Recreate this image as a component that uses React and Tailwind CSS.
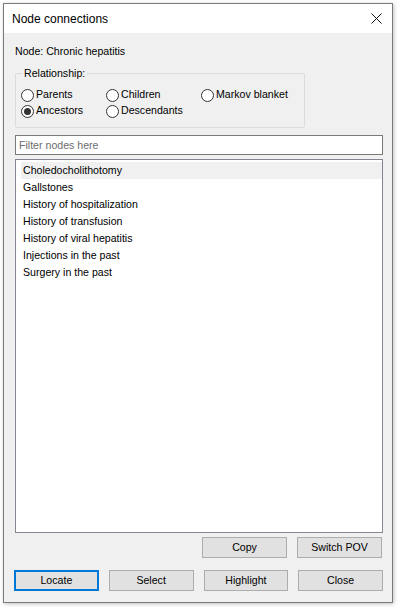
import React, { useState } from 'react';

const nodes = [
  'Choledocholithotomy',
  'Gallstones',
  'History of hospitalization',
  'History of transfusion',
  'History of viral hepatitis',
  'Injections in the past',
  'Surgery in the past',
];

const Radio = ({ label, checked, onClick, width }) => (
  <button onClick={onClick} className={`flex items-center gap-[2px] h-4 text-left ${width}`}>
    <span className="w-[13px] h-[13px] rounded-full border border-[#333] bg-white flex items-center justify-center shrink-0">
      {checked && <span className="w-[7px] h-[7px] rounded-full bg-[#333]"></span>}
    </span>
    <span>{label}</span>
  </button>
);

const Btn = ({ children, focused }) => (
  <button
    className={`w-[85px] h-[21px] bg-[#e1e1e1] flex items-center justify-center ${
      focused ? 'border-2 border-[#0078d7]' : 'border border-[#adadad]'
    }`}
  >
    {children}
  </button>
);

export default function App() {
  const [rel, setRel] = useState('Ancestors');
  const [filter, setFilter] = useState('');

  const shown = nodes.filter((n) => n.toLowerCase().includes(filter.toLowerCase()));

  return (
    <div className="w-[397px] h-[607px] bg-white pt-[3px] pl-[3px] text-[10.6px] text-black" style={{ fontFamily: '"Liberation Sans", Arial, sans-serif' }}>
      <div className="w-[390px] h-[600px] border border-[#7a7a7a] shadow-[1px_1px_4px_rgba(0,0,0,0.25)] flex flex-col bg-[#f0f0f0]">
        {/* title bar */}
        <div className="h-[29px] bg-white flex items-center justify-between pl-[8px] pr-[8px] shrink-0">
          <span className="text-[12px]">Node connections</span>
          <svg width="11" height="11" viewBox="0 0 11 11" className="mr-[2px]">
            <path d="M0.5 0.5 L10.5 10.5 M10.5 0.5 L0.5 10.5" stroke="#111" strokeWidth="1" />
          </svg>
        </div>

        <div className="flex-1 flex flex-col pl-[11px] pr-[9px]">
          <div className="mt-[12px] h-[13px] leading-[13px]">Node: Chronic hepatitis</div>

          {/* relationship group */}
          <div className="relative mt-[15px] w-[290px] h-[55px] border border-[#dcdcdc] rounded-[2px]">
            <span className="absolute -top-[7px] left-[6px] px-[2px] bg-[#f0f0f0] leading-[13px]">Relationship:</span>
            <div className="pt-[13px] pl-[5px] flex flex-col">
              <div className="flex">
                <Radio label="Parents" width="w-[85px]" checked={rel === 'Parents'} onClick={() => setRel('Parents')} />
                <Radio label="Children" width="w-[95px]" checked={rel === 'Children'} onClick={() => setRel('Children')} />
                <Radio label="Markov blanket" checked={rel === 'Markov'} onClick={() => setRel('Markov')} />
              </div>
              <div className="flex">
                <Radio label="Ancestors" width="w-[85px]" checked={rel === 'Ancestors'} onClick={() => setRel('Ancestors')} />
                <Radio label="Descendants" width="w-[95px]" checked={rel === 'Descendants'} onClick={() => setRel('Descendants')} />
              </div>
            </div>
          </div>

          {/* filter */}
          <input
            value={filter}
            onChange={(e) => setFilter(e.target.value)}
            placeholder="Filter nodes here"
            className="mt-[7px] h-[20px] w-full border border-[#7a7a7a] bg-white px-[3px] outline-none placeholder:text-[#6d6d6d]"
          />

          {/* node list */}
          <div className="mt-[4px] h-[374px] w-full border border-[#828790] bg-white pt-[2px]">
            {shown.map((n, i) => (
              <div key={n} className={`h-[17px] leading-[17px] ml-[5px] pl-[2px] ${i === 0 ? 'bg-[#f0f0f0]' : ''}`}>
                {n}
              </div>
            ))}
          </div>

          <div className="mt-[4px] flex justify-end gap-[10px] pr-[1px]">
            <Btn>Copy</Btn>
            <Btn>Switch POV</Btn>
          </div>

          <div className="mt-[12px] flex gap-[10px] -ml-[1px]">
            <Btn focused>Locate</Btn>
            <Btn>Select</Btn>
            <Btn>Highlight</Btn>
            <Btn>Close</Btn>
          </div>
        </div>
      </div>
    </div>
  );
}
